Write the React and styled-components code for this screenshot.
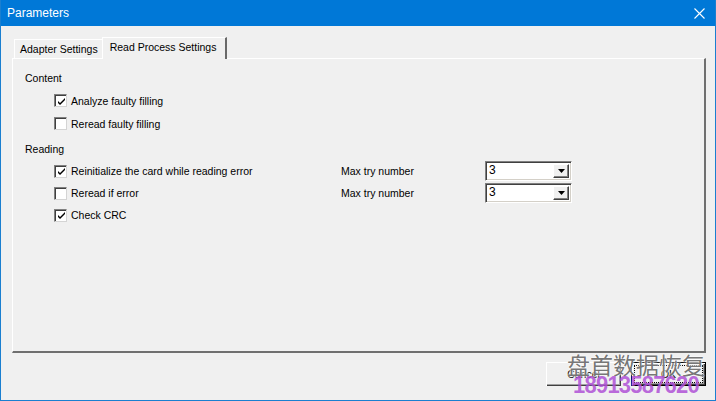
import styled, { createGlobalStyle } from "styled-components";

const GlobalStyle = createGlobalStyle`
  html, body {
    margin: 0;
    padding: 0;
    background: #f0f0f0;
  }
  body {
    font-family: "Liberation Sans", Arial, sans-serif;
    font-size: 10.5px;
    color: #000;
  }
`;

function CheckBox({ checked }) {
  return (
    <Box>
      {checked && (
        <svg width="9" height="9" viewBox="0 0 9 9">
          <path d="M1 4 L3 6 L8 1 L8 3 L3 8 L1 6 Z" fill="#000" />
        </svg>
      )}
    </Box>
  );
}

function Check({ checked, children }) {
  return (
    <CheckLabel>
      <CheckBox checked={checked} />
      <span>{children}</span>
    </CheckLabel>
  );
}

function Combo({ value }) {
  return (
    <ComboBox>
      <ComboText>{value}</ComboText>
      <ComboButton>
        <svg width="7" height="4" viewBox="0 0 7 4">
          <path d="M0 0 H7 L3.5 4 Z" fill="#000" />
        </svg>
      </ComboButton>
    </ComboBox>
  );
}

export default function App() {
  return (
    <>
      <GlobalStyle />
      <Window>
        <TitleBar>
          <span>Parameters</span>
          <svg width="11" height="11" viewBox="0 0 11 11">
            <path d="M0.5 0.5 L10.5 10.5 M10.5 0.5 L0.5 10.5" stroke="#fff" strokeWidth="1.1" />
          </svg>
        </TitleBar>
        <Body>
          <Tabs>
            <Tab>Adapter Settings</Tab>
            <Tab $active>Read Process Settings</Tab>
          </Tabs>
          <Panel>
            <GroupLabel>Content</GroupLabel>
            <Item>
              <Check checked>Analyze faulty filling</Check>
            </Item>
            <Item>
              <Check>Reread faulty filling</Check>
            </Item>
            <GroupLabel $top={2}>Reading</GroupLabel>
            <OptionRow>
              <Check checked>Reinitialize the card while reading error</Check>
              <span>Max try number</span>
              <Combo value="3" />
            </OptionRow>
            <OptionRow>
              <Check>Reread if error</Check>
              <span>Max try number</span>
              <Combo value="3" />
            </OptionRow>
            <OptionRow>
              <Check checked>Check CRC</Check>
            </OptionRow>
          </Panel>
          <Footer>
            <Button>Cancel</Button>
            <Button $default>
              <Focus>OK</Focus>
            </Button>
          </Footer>
        </Body>
        <Watermark>
          <div className="name">盘首数据恢复</div>
          <div className="phone">18913587620</div>
        </Watermark>
      </Window>
    </>
  );
}

/* ---------------- styled ---------------- */
const Window = styled.div`
  position: relative;
  width: 716px;
  height: 401px;
  box-sizing: border-box;
  border: 1px solid #1a7fd0;
  border-top: none;
  background: #f0f0f0;
  display: flex;
  flex-direction: column;
  overflow: hidden;
`;

const TitleBar = styled.div`
  height: 26px;
  margin: 0 -1px;
  background: #0078d7;
  color: #fff;
  font-size: 12px;
  display: flex;
  align-items: center;
  justify-content: space-between;
  padding: 0 11px 0 7px;
  flex-shrink: 0;
`;

const Body = styled.div`
  flex: 1;
  display: flex;
  flex-direction: column;
  padding: 11px 9px 0 11px;
`;

const Tabs = styled.div`
  display: flex;
  align-items: flex-end;
  height: 21px;
  padding-left: 2px;
`;

const Tab = styled.div`
  box-sizing: border-box;
  height: ${(p) => (p.$active ? 22 : 19)}px;
  padding: ${(p) => (p.$active ? "3px 9px 0 7px" : "0 4px 0 5px")};
  margin-bottom: ${(p) => (p.$active ? -1 : 0)}px;
  display: flex;
  align-items: ${(p) => (p.$active ? "flex-start" : "center")};
  background: #f0f0f0;
  border-top: 1px solid #fff;
  border-left: 1px solid #fff;
  border-right: ${(p) => (p.$active ? "2px solid #696969" : "none")};
  position: relative;
  z-index: ${(p) => (p.$active ? 1 : 0)};
  white-space: nowrap;
`;

const Panel = styled.div`
  box-sizing: border-box;
  height: 295px;
  border-top: 1px solid #fff;
  border-left: 1px solid #fff;
  border-right: 2px solid #6f6f6f;
  border-bottom: 2px solid #6f6f6f;
  padding-top: 7px;
`;

const GroupLabel = styled.div`
  height: 23px;
  margin-top: ${(p) => p.$top || 0}px;
  padding-left: 12px;
  display: flex;
  align-items: center;
`;

const Item = styled.div`
  height: 23px;
  padding-left: 41px;
  display: flex;
  align-items: center;
`;

const OptionRow = styled.div`
  height: 22px;
  padding-left: 41px;
  display: grid;
  grid-template-columns: 287px 144px 87px;
  align-items: center;
`;

const CheckLabel = styled.label`
  display: flex;
  align-items: center;
  gap: 4px;
  white-space: nowrap;
`;

const Box = styled.span`
  box-sizing: border-box;
  width: 13px;
  height: 13px;
  background: #fff;
  border-top: 1px solid #808080;
  border-left: 1px solid #808080;
  border-right: 1px solid #d4d4d4;
  border-bottom: 1px solid #d4d4d4;
  box-shadow: inset 1px 1px 0 #404040;
  display: flex;
  align-items: center;
  justify-content: center;
  padding: 1px 0 0 1px;
`;

const ComboBox = styled.div`
  box-sizing: border-box;
  width: 87px;
  height: 20px;
  background: #fff;
  border-top: 1px solid #808080;
  border-left: 1px solid #808080;
  border-right: 1px solid #fff;
  border-bottom: 1px solid #fff;
  box-shadow: inset 1px 1px 0 #404040, inset -1px -1px 0 #d4d0c8;
  display: flex;
  align-items: stretch;
  padding: 2px;
`;

const ComboText = styled.div`
  flex: 1;
  padding-left: 1px;
  line-height: 13px;
  font-size: 12px;
`;

const ComboButton = styled.div`
  box-sizing: border-box;
  width: 16px;
  background: #f0f0f0;
  border-top: 1px solid #fff;
  border-left: 1px solid #fff;
  border-right: 1px solid #404040;
  border-bottom: 1px solid #404040;
  box-shadow: inset -1px -1px 0 #808080;
  display: flex;
  align-items: center;
  justify-content: center;
`;

const Footer = styled.div`
  display: flex;
  justify-content: flex-end;
  gap: 10px;
  padding-top: 9px;
`;

const Button = styled.div`
  box-sizing: border-box;
  width: 75px;
  height: 24px;
  background: #f0f0f0;
  border: ${(p) => (p.$default ? "1px solid #000" : "none")};
  box-shadow: inset 1px 1px 0 #fff, inset -1px -1px 0 #404040,
    inset -2px -2px 0 #a0a0a0;
  display: flex;
  align-items: center;
  justify-content: center;
  padding: 2px;
`;

const Focus = styled.div`
  box-sizing: border-box;
  width: 100%;
  height: 100%;
  border: 1px dotted #000;
  display: flex;
  align-items: center;
  justify-content: center;
`;

const Watermark = styled.div`
  position: absolute;
  right: 10px;
  bottom: 6px;
  display: flex;
  flex-direction: column;
  align-items: center;
  pointer-events: none;

  .name {
    font-family: "Noto Sans CJK SC", sans-serif;
    font-size: 23px;
    line-height: 24px;
    color: rgba(100, 100, 100, 0.9);
    text-shadow: 0 0 2px #fff, 0 0 2px #fff;
  }

  .phone {
    font-family: "Liberation Sans", Arial, sans-serif;
    font-weight: bold;
    font-size: 22px;
    line-height: 18px;
    color: rgba(175, 80, 215, 0.85);
    letter-spacing: -0.8px;
    transform: scaleY(1.1);
  }
`;
